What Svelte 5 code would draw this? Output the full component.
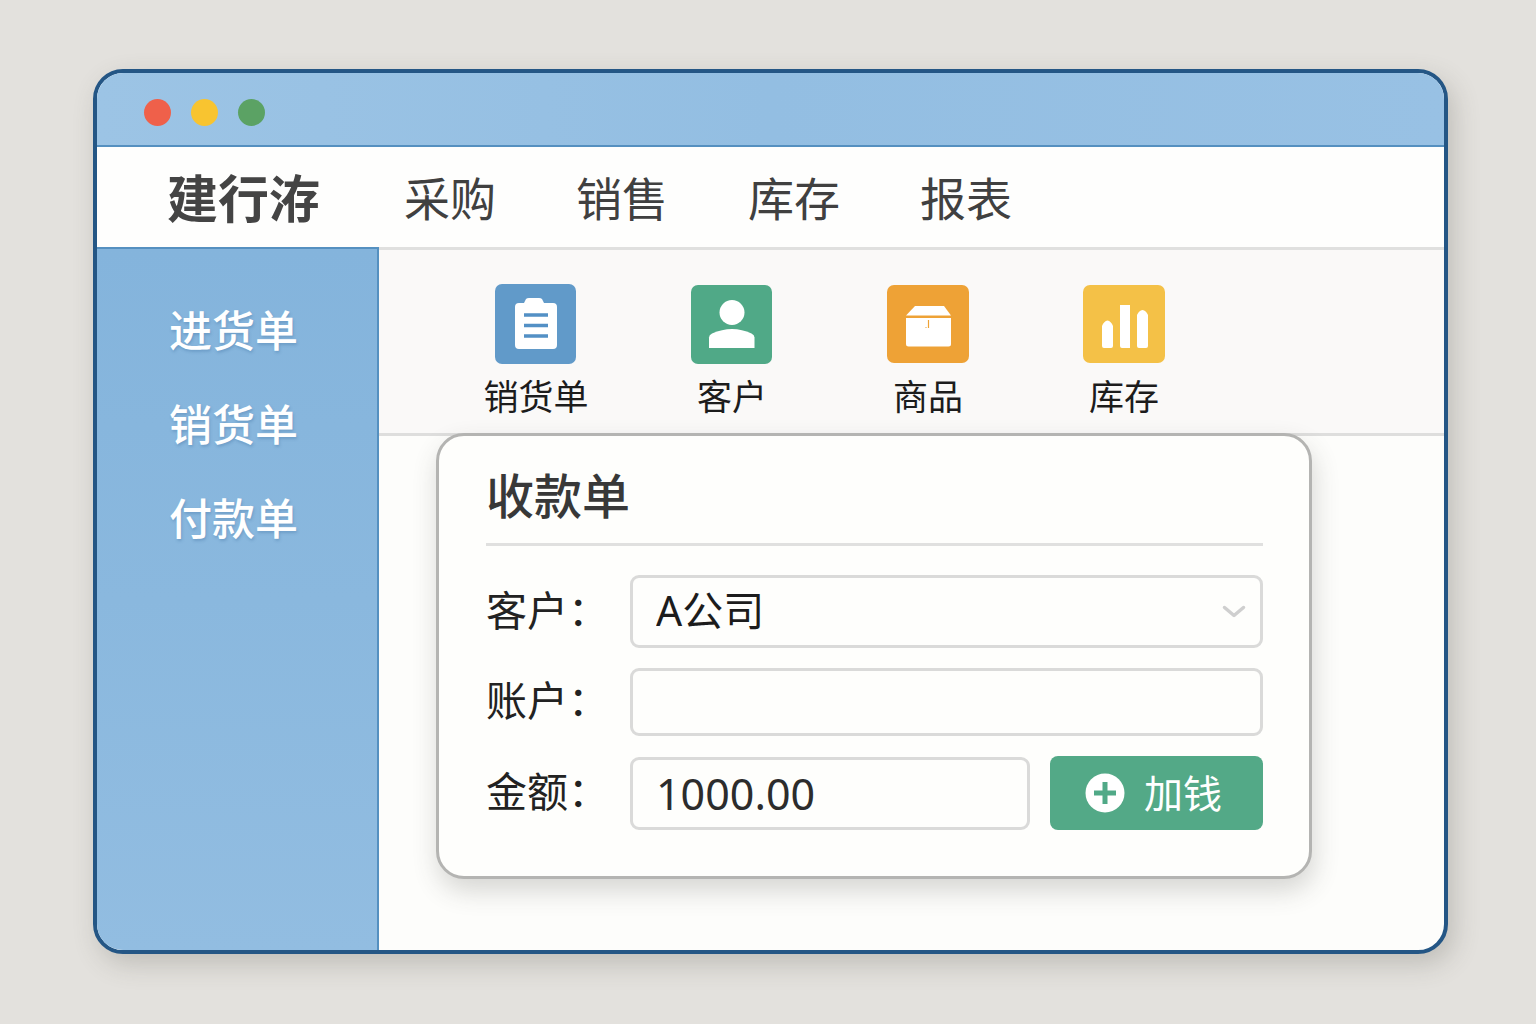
<script>
  const menus = ['采购', '销售', '库存', '报表'];
  const docs = ['进货单', '销货单', '付款单'];
  let customer = $state('A公司');
  let account = $state('');
  let amount = $state('1000.00');
</script>

<div class="stage">
  <div class="window">
    <div class="titlebar">
      <span class="dot red"></span>
      <span class="dot yellow"></span>
      <span class="dot green"></span>
    </div>

    <header class="menubar">
      <h1 class="brand">建行洊</h1>
      <nav class="menus">
        {#each menus as menu}
          <a href="#{menu}">{menu}</a>
        {/each}
      </nav>
    </header>

    <div class="body">
      <nav class="sidebar">
        {#each docs as doc}
          <a href="#{doc}">{doc}</a>
        {/each}
      </nav>

      <main class="content">
        <div class="toolbar">
          <button class="tool" type="button">
            <svg width="82" height="80" viewBox="0 0 82 80" aria-hidden="true">
              <rect width="81" height="80" rx="7" fill="#619ac9" />
              <path d="M24 19h5l2-4q1-1 3-1h10q2 0 3 1l2 4h9q4 0 4 4v38q0 4-4 4H24q-4 0-4-4V23q0-4 4-4z" fill="#fff" />
              <path d="M29 31h24M29 41.500h24M29 52h24" stroke="#5390c5" stroke-width="3.500" />
            </svg>
            <span>销货单</span>
          </button>
          <button class="tool" type="button">
            <svg width="82" height="80" viewBox="0 0 82 80" aria-hidden="true">
              <rect y="1" width="81" height="79" rx="7" fill="#50a987" />
              <circle cx="41" cy="28.500" r="12.500" fill="#fff" />
              <path d="M18 64V53.500q0-2.500 3-4Q31 45 41 45t19.500 4.500q3 1.500 3 4V64z" fill="#fff" />
            </svg>
            <span>客户</span>
          </button>
          <button class="tool" type="button">
            <svg width="82" height="80" viewBox="0 0 82 80" aria-hidden="true">
              <rect y="1" width="82" height="78" rx="7" fill="#eea236" />
              <path d="M28 22h29l7 9.500H19z" fill="#fff" />
              <path d="M19 34h45v26q0 2.500-2.500 2.500h-40Q19 62.500 19 60z" fill="#fff" />
              <path d="M41.500 36v8M38.500 43.500h1" stroke="#eea236" stroke-width="1.200" />
            </svg>
            <span>商品</span>
          </button>
          <button class="tool" type="button">
            <svg width="82" height="80" viewBox="0 0 82 80" aria-hidden="true">
              <rect y="1" width="82" height="78" rx="7" fill="#f4c147" />
              <path d="M19 42q2-5 5.500-5.500Q28 37 30 42v20q0 2-2 2h-7q-2 0-2-2zM37 21h10v43H39q-2 0-2-2zM54 31q2-4.500 5.500-5Q63 26.500 65 31v31q0 2-2 2h-7q-2 0-2-2z" fill="#fff" />
            </svg>
            <span>库存</span>
          </button>
        </div>

        <form class="panel" onsubmit={(e) => e.preventDefault()}>
          <h2>收款单</h2>
          <div class="row">
            <label for="customer">客户：</label>
            <div class="select">
              <select id="customer" bind:value={customer}>
                <option>A公司</option>
              </select>
              <svg class="chevron" width="24" height="14" viewBox="0 0 24 14" aria-hidden="true">
                <path d="M2.500 2.500L12 10.500l9.500-8" fill="none" stroke="#cfcfcf" stroke-width="3.500" stroke-linecap="round" stroke-linejoin="round" />
              </svg>
            </div>
          </div>
          <div class="row">
            <label for="account">账户：</label>
            <input id="account" class="short" type="text" bind:value={account} />
          </div>
          <div class="row">
            <label for="amount">金额：</label>
            <input id="amount" type="text" bind:value={amount} />
            <button class="add" type="submit">
              <svg width="40" height="40" viewBox="0 0 40 40" aria-hidden="true">
                <circle cx="20" cy="20" r="19.500" fill="#fff" />
                <path d="M20 9v22M9 20h22" stroke="#50a987" stroke-width="5" />
              </svg>
              <span>加钱</span>
            </button>
          </div>
        </form>
      </main>
    </div>
  </div>
</div>

<style>
  :global(body) {
    background: #e3e1dd;
  }
  .stage,
  .stage * {
    box-sizing: border-box;
  }
  .stage {
    display: flex;
    min-height: 100vh;
    padding: 69px 88px 70px 93px;
    font-family: 'Noto Sans', 'Noto Sans CJK SC', sans-serif;
    color: #222;
  }
  .window {
    display: flex;
    flex: 1;
    flex-direction: column;
    overflow: hidden;
    border: 4px solid #245685;
    border-radius: 30px;
    background: #fdfdfb;
    box-shadow: 6px 10px 26px rgba(80, 78, 72, 0.24);
  }
  .titlebar {
    display: flex;
    align-items: center;
    gap: 20px;
    height: 74px;
    padding: 6px 47px 0;
    border-bottom: 2px solid #5590c0;
    background: linear-gradient(90deg, #9cc4e5, #93bee2 50%, #98c1e4);
  }
  .dot {
    width: 27px;
    height: 27px;
    border-radius: 50%;
  }
  .red {
    background: #ef604a;
  }
  .yellow {
    background: #f8c430;
  }
  .green {
    background: #5ba264;
  }
  .menubar {
    display: flex;
    align-items: center;
    gap: 84px;
    height: 100px;
    padding: 2px 70px 0;
    background: #fefefd;
  }
  h1,
  h2 {
    margin: 0;
  }
  .brand {
    font-size: 51px;
    line-height: 60px;
    font-weight: 700;
    color: #444;
  }
  .menus {
    display: flex;
    gap: 80px;
  }
  a {
    color: inherit;
    text-decoration: none;
    white-space: nowrap;
  }
  .menus a {
    font-size: 46px;
    line-height: 60px;
    color: #404040;
  }
  .body {
    display: flex;
    flex: 1;
  }
  .sidebar {
    display: flex;
    flex-direction: column;
    gap: 34px;
    width: 282px;
    padding: 52px 72px;
    border-top: 2px solid #5590c0;
    border-right: 2px solid #5590c0;
    background: linear-gradient(#84b4dc, #8ab8de 50%, #92bde1);
  }
  .sidebar a {
    font-size: 43px;
    line-height: 60px;
    font-weight: 500;
    color: #fff;
    text-shadow: 1px 2px 3px rgba(50, 100, 150, 0.3);
  }
  .content {
    flex: 1;
    border-top: 3px solid #e0e0df;
  }
  .toolbar {
    display: flex;
    height: 186px;
    padding: 34px 0 0 59px;
    border-bottom: 3px solid #dededd;
    background: #faf9f8;
  }
  button {
    border: 0;
    padding: 0;
    font-family: inherit;
    cursor: pointer;
  }
  .tool {
    display: flex;
    flex-direction: column;
    align-items: center;
    gap: 8px;
    width: 196px;
    background: none;
    font-size: 35px;
    line-height: 50px;
    color: #1c1c1c;
  }
  .panel {
    position: relative;
    display: flex;
    flex-direction: column;
    gap: 20px;
    margin: -3px 132px 71px 57px;
    padding: 29px 46px 46px 47px;
    border: 3px solid #b4b4b2;
    border-radius: 28px;
    background: #fefefc;
    box-shadow: 2px 12px 26px rgba(60, 60, 55, 0.2);
  }
  h2 {
    margin-bottom: 9px;
    padding-bottom: 16px;
    border-bottom: 3px solid #e0e0df;
    font-size: 48px;
    line-height: 62px;
    font-weight: 500;
    color: #383838;
  }
  .row {
    display: flex;
    align-items: center;
    gap: 20px;
  }
  label {
    width: 124px;
    padding-bottom: 4px;
    font-size: 41px;
    line-height: 60px;
    white-space: nowrap;
  }
  .select {
    position: relative;
    flex: 1;
  }
  input,
  select {
    flex: 1;
    width: 100%;
    min-width: 0;
    height: 73px;
    margin: 0;
    padding: 0 23px;
    border: 3px solid #dadad9;
    border-radius: 9px;
    outline: 0;
    background: transparent;
    font-family: inherit;
    font-size: 43px;
    color: #2c2c2c;
  }
  select {
    display: block;
    padding-bottom: 3px;
    appearance: none;
    font-size: 41px;
    color: #1c1c1c;
  }
  .short {
    height: 68px;
  }
  .chevron {
    position: absolute;
    top: 30px;
    right: 17px;
    pointer-events: none;
  }
  .add {
    display: flex;
    align-items: center;
    justify-content: center;
    gap: 19px;
    width: 213px;
    height: 74px;
    padding-right: 6px;
    border-radius: 8px;
    background: #53a987;
    font-size: 39px;
    line-height: 60px;
    color: #fff;
  }
</style>
